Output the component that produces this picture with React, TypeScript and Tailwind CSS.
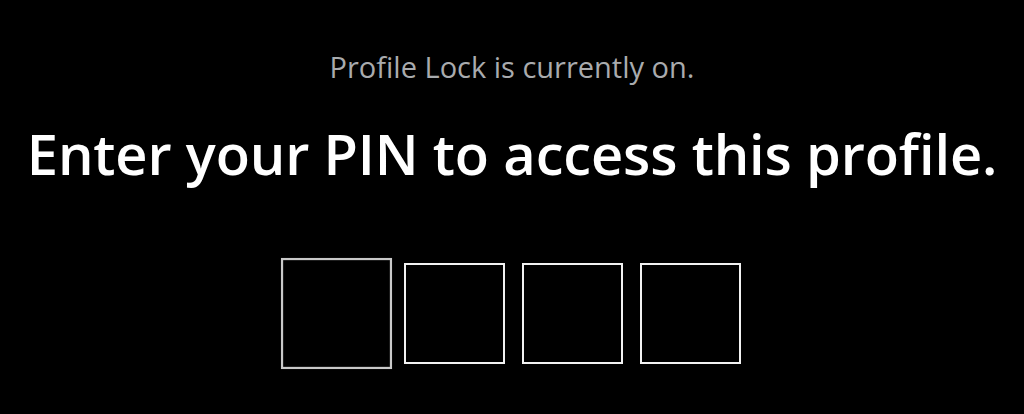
import React, { useState } from 'react'

const DIGITS = 4

export default function App() {
  const [focused, setFocused] = useState(0)

  return (
    <div className="w-full h-[414px] bg-black flex flex-col items-center overflow-hidden" style={{ fontFamily: '"Open Sans", "Noto Sans", sans-serif' }}>
      <div className="pt-[49px] text-[29px] leading-[36px] text-[#a9abae] whitespace-nowrap">
        Profile Lock is currently on.
      </div>
      <h1 className="mt-[33px] text-[56px] leading-[70px] font-semibold text-white tracking-[-0.15px] whitespace-nowrap">
        Enter your PIN to access this profile.
      </h1>
      <div className="mt-[75px] pl-[3px] flex gap-[17px]">
        {Array.from({ length: DIGITS }).map((_, i) => (
          <input
            key={i}
            type="password"
            maxLength={1}
            onFocus={() => setFocused(i)}
            className={
              i === focused
                ? 'w-[101px] h-[101px] bg-black border-2 border-[#c9c9c9] scale-110 outline-none text-white text-center text-5xl'
                : 'w-[101px] h-[101px] bg-black border-2 border-[#f2f2f2] outline-none text-white text-center text-5xl'
            }
          />
        ))}
      </div>
    </div>
  )
}
